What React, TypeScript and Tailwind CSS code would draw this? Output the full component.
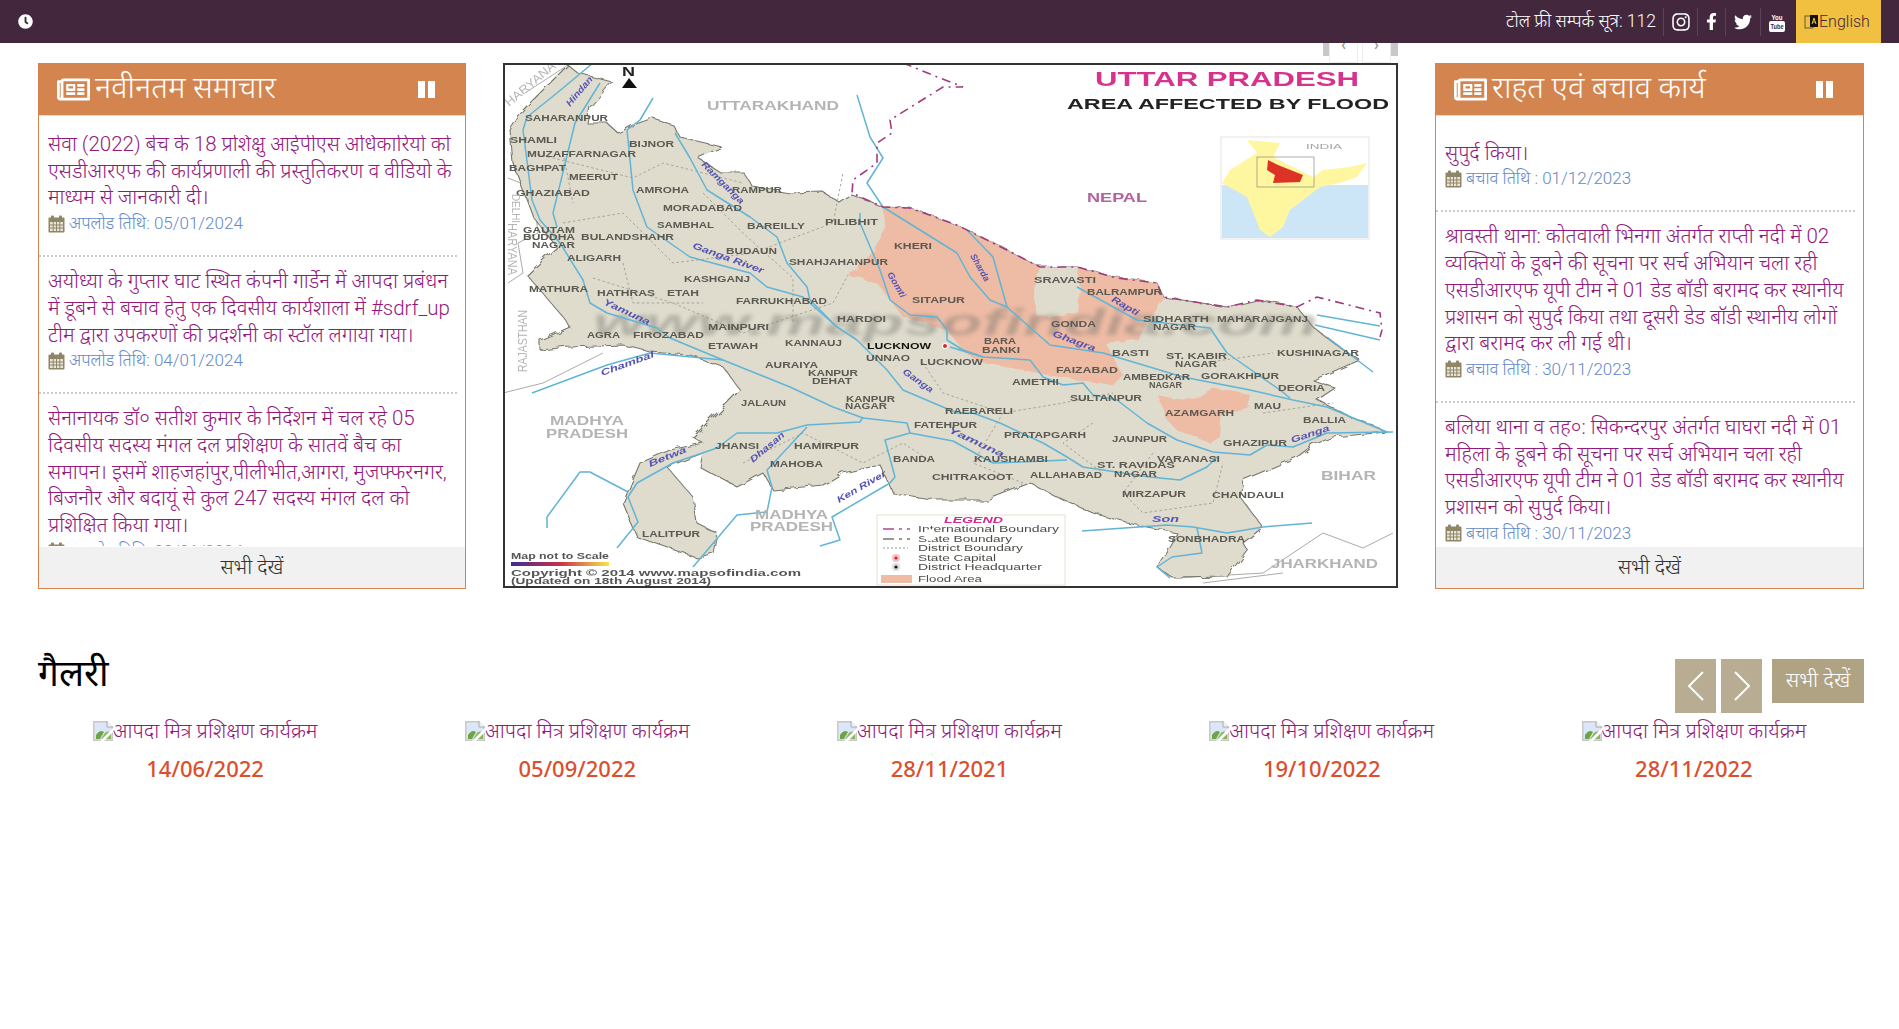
import React from "react";
import { FaInstagram, FaFacebookF, FaTwitter, FaClock, FaRegNewspaper } from "react-icons/fa";

// [text, x, baseline, width]
const districts: [string, number, number, number][] = [
  ["SAHARANPUR", 22, 58, 83], ["SHAMLI", 7, 80, 47], ["MUZAFFARNAGAR", 24, 94, 109], ["BAGHPAT", 6, 108, 57],
  ["MEERUT", 66, 117, 49], ["GHAZIABAD", 13, 133, 74], ["AMROHA", 133, 130, 53], ["BIJNOR", 126, 84, 45],
  ["RAMPUR", 229, 130, 50], ["MORADABAD", 160, 148, 79], ["SAMBHAL", 154, 165, 57], ["BAREILLY", 244, 166, 58],
  ["PILIBHIT", 322, 162, 53], ["GAUTAM", 20, 170, 52], ["BUDDHA", 20, 177, 52], ["NAGAR", 29, 185, 43],
  ["BULANDSHAHR", 78, 177, 93], ["BUDAUN", 223, 191, 51], ["SHAHJAHANPUR", 286, 202, 99], ["KHERI", 391, 186, 38],
  ["ALIGARH", 64, 198, 54], ["KASHGANJ", 181, 219, 66], ["MATHURA", 26, 229, 59], ["HATHRAS", 94, 233, 58],
  ["ETAH", 164, 233, 32], ["FARRUKHABAD", 233, 241, 91], ["HARDOI", 334, 259, 49], ["SITAPUR", 409, 240, 53],
  ["MAINPURI", 205, 267, 61], ["AGRA", 84, 275, 33], ["FIROZABAD", 130, 275, 71], ["ETAWAH", 205, 286, 50],
  ["KANNAUJ", 282, 283, 57], ["UNNAO", 363, 298, 44], ["LUCKNOW", 417, 302, 63], ["AURAIYA", 262, 305, 53],
  ["KANPUR", 305, 313, 50], ["DEHAT", 309, 321, 40], ["JALAUN", 238, 343, 45], ["KANPUR", 343, 339, 49],
  ["NAGAR", 342, 346, 42], ["FATEHPUR", 411, 365, 63], ["JHANSI", 212, 386, 44], ["HAMIRPUR", 291, 386, 65],
  ["MAHOBA", 267, 404, 53], ["BANDA", 390, 399, 42], ["LALITPUR", 139, 474, 58], ["CHITRAKOOT", 429, 417, 81],
  ["BARA", 481, 281, 32], ["BANKI", 479, 290, 38], ["BASTI", 609, 293, 37], ["ST. KABIR", 663, 296, 61],
  ["NAGAR", 672, 304, 42], ["KUSHINAGAR", 774, 293, 82], ["FAIZABAD", 553, 310, 62], ["AMBEDKAR", 620, 317, 67],
  ["NAGAR", 646, 325, 33], ["GORAKHPUR", 698, 316, 78], ["DEORIA", 775, 328, 47], ["AMETHI", 509, 322, 47],
  ["SULTANPUR", 567, 338, 72], ["MAU", 751, 346, 27], ["AZAMGARH", 662, 353, 69], ["BALLIA", 800, 360, 43],
  ["RAEBARELI", 442, 351, 68], ["PRATAPGARH", 501, 375, 82], ["JAUNPUR", 609, 379, 55], ["GHAZIPUR", 720, 383, 64],
  ["KAUSHAMBI", 471, 399, 74], ["VARANASI", 654, 399, 63], ["ST. RAVIDAS", 594, 405, 78], ["NAGAR", 611, 414, 43],
  ["ALLAHABAD", 527, 415, 72], ["MIRZAPUR", 619, 434, 64], ["CHANDAULI", 709, 435, 72], ["SONBHADRA", 665, 479, 77],
  ["SRAVASTI", 531, 220, 62], ["BALRAMPUR", 584, 232, 75], ["SIDHARTH", 640, 259, 66], ["MAHARAJGANJ", 714, 259, 91],
  ["NAGAR", 650, 267, 43], ["GONDA", 548, 264, 45],
];

const regions: [string, number, number, number][] = [
  ["UTTARAKHAND", 204, 47, 132], ["MADHYA", 47, 362, 74], ["PRADESH", 43, 375, 82], ["MADHYA", 252, 456, 73],
  ["PRADESH", 247, 468, 83], ["BIHAR", 818, 417, 55], ["JHARKHAND", 768, 505, 107],
];

// [text, x, y, width, angle]
const riverNames: [string, number, number, number, number][] = [
  ["Hindan", 67, 44, 36, -50], ["Ramganga", 198, 102, 56, 45], ["Ganga River", 189, 185, 75, 20], ["Gomti", 384, 211, 28, 60],
  ["Sharda", 467, 193, 30, 60], ["Yamuna", 100, 241, 50, 25], ["Chambal", 99, 313, 56, -20], ["Betwa", 147, 404, 40, -22],
  ["Dhasan", 250, 400, 42, -40], ["Ken River", 336, 440, 55, -30], ["Ganga", 399, 310, 35, 35], ["Yamuna", 445, 369, 60, 25],
  ["Ghagra", 549, 273, 45, 20], ["Rapti", 608, 238, 30, 30], ["Ganga", 789, 380, 40, -18], ["Son", 649, 459, 27, 0],
];

const rivers = [
  "M90 0L54 30L24 54L20 67L29 137L37 157L57 180L80 217L87 240L104 250L154 265L167 275L220 297L287 324L330 344L360 355L404 360L407 370L450 378L490 400L564 397",
  "M150 35L137 57L124 67L130 127L144 164L187 194L247 210L264 224L300 234L334 264L354 277L384 307L400 327L454 350L470 350L497 360L540 380L564 394L580 404L647 414L677 417L704 404L714 394",
  "M447 284L480 294L527 297L540 314L560 322L580 320L590 332L614 337L644 360L674 377L710 389L747 392L764 382L790 384L824 370L890 369",
  "M354 32L367 74L380 95L364 120L380 144L417 167L454 190L467 214L487 237L504 244L547 282L600 290L680 314L747 327L790 337L824 344L884 369",
  "M464 167L490 194L504 244",
  "M357 150L357 160L377 207L387 237L407 252L434 254L444 267L444 277L460 287L480 294",
  "M172 70L187 95L204 127L247 154L274 174L284 200L304 224L307 237L334 264",
  "M97 20L72 60L50 150L54 164",
  "M29 330L104 302L147 290L220 297",
  "M114 485L135 459L125 434L134 420L170 400L214 385L234 370L274 370L304 362L357 359L360 354",
  "M190 504L234 452L264 449L269 424L264 407L304 364",
  "M44 465L44 454L77 409L87 409L125 429",
  "M317 483L337 477L329 454L387 420L392 414L382 377L407 370",
  "M579 468L664 462L690 464L724 470L760 464L809 460",
  "M694 465L699 490L669 494L654 504L667 515",
  "M574 224L634 257L707 265L724 290L777 327L787 335",
  "M814 252L877 263M812 262L877 277M824 274L870 309",
];

const statePath =
  "M65 2L75 10L109 19L87 44L84 60L104 60L115 70L130 62L150 55L170 62L177 74L219 84L195 95L217 109L240 109L250 124L287 130L320 129L337 140L349 132L380 144L407 145L447 159L490 180L537 204L574 204L614 215L654 220L660 234L724 244L754 237L794 244L810 264L840 287L857 297L810 317L832 325L814 337L847 354L884 369L830 374L810 382L794 394L740 417L737 434L760 464L740 480L744 487L724 514L670 515L654 504L674 470L624 460L590 450L560 437L527 420L484 437L434 437L390 430L377 402L340 410L320 422L270 427L260 410L234 424L197 404L200 390L164 404L190 434L194 460L214 470L210 490L194 495L134 474L120 440L137 400L167 387L200 380L190 374L217 347L237 327L220 304L187 292L147 289L120 282L67 284L37 287L37 277L67 264L60 254L24 212L54 184L30 154L20 127L10 100L7 67L20 47Z";

const floodPath =
  "M384 164L370 187L345 212L374 220L400 254L444 267L462 290L479 300L520 307L544 312L610 322L620 312L602 280L634 277L640 267L647 254L660 234L654 220L614 215L574 204L537 204L490 180L447 159L407 145L380 144Z";

const districtLines = [
  "M30 90L130 115L160 100L240 120M60 160L120 150L170 200L250 190L330 160L340 110M90 215L170 240L240 270L330 240L345 212",
  "M200 130L240 170L290 215L290 260M420 300L440 330L500 350L560 340L610 330M500 350L470 400L520 420M650 390L620 430L640 450L710 440L720 400",
  "M700 300L770 290M760 350L830 340M590 360L560 380L600 410M240 400L300 370L360 400L400 380L430 400M120 200L130 240L200 240M60 90L70 140",
];

const newsItems = [
  {
    text: "सेवा (2022) बेच के 18 प्रशिक्षु आईपीएस अधिकारियों को\nएसडीआरएफ की कार्यप्रणाली की प्रस्तुतिकरण व वीडियो के\nमाध्यम से जानकारी दी।",
    date: "05/01/2024",
  },
  {
    text: "अयोध्या के गुप्तार घाट स्थित कंपनी गार्डेन में आपदा प्रबंधन\nमें डूबने से बचाव हेतु एक दिवसीय कार्यशाला में #sdrf_up\nटीम द्वारा उपकरणों की प्रदर्शनी का स्टॉल लगाया गया।",
    date: "04/01/2024",
  },
  {
    text: "सेनानायक डॉ० सतीश कुमार के निर्देशन में चल रहे 05\nदिवसीय सदस्य मंगल दल प्रशिक्षण के सातवें बैच का\nसमापन। इसमें शाहजहांपुर,पीलीभीत,आगरा, मुजफ्फरनगर,\nबिजनौर और बदायूं से कुल 247 सदस्य मंगल दल को\nप्रशिक्षित किया गया।",
    date: "03/01/2024",
  },
];

const rescueItems = [
  { text: "प्रशासन को\nसुपुर्द किया।", date: "01/12/2023" },
  {
    text: "श्रावस्ती थाना: कोतवाली भिनगा अंतर्गत राप्ती नदी में 02\nव्यक्तियों के डूबने की सूचना पर सर्च अभियान चला रही\nएसडीआरएफ यूपी टीम ने 01 डेड बॉडी बरामद कर स्थानीय\nप्रशासन को सुपुर्द किया तथा दूसरी डेड बॉडी स्थानीय लोगों\nद्वारा बरामद कर ली गई थी।",
    date: "30/11/2023",
  },
  {
    text: "बलिया थाना व तह०: सिकन्दरपुर अंतर्गत घाघरा नदी में 01\nमहिला के डूबने की सूचना पर सर्च अभियान चला रही\nएसडीआरएफ यूपी टीम ने 01 डेड बॉडी बरामद कर स्थानीय\nप्रशासन को सुपुर्द किया।",
    date: "30/11/2023",
  },
];

const galleryDates = ["14/06/2022", "05/09/2022", "28/11/2021", "19/10/2022", "28/11/2022"];

function CalendarIcon() {
  return (
    <svg width="17" height="18" viewBox="0 0 17 18" className="shrink-0">
      <rect x="0.5" y="2.5" width="16" height="15" rx="1" fill="#8f8567" />
      <rect x="3" y="0.5" width="3" height="5" rx="1" fill="#8f8567" />
      <rect x="11" y="0.5" width="3" height="5" rx="1" fill="#8f8567" />
      <path d="M2 7h13v9H2z" fill="#e9e5d8" />
      <path d="M2 10h13M2 13h13M5.2 7v9M8.5 7v9M11.8 7v9" stroke="#8f8567" strokeWidth="1" />
    </svg>
  );
}

function BrokenImage() {
  return (
    <svg width="20" height="20" viewBox="0 0 20 20" className="shrink-0">
      <path d="M0 0h14l6 6v14H0z" fill="#c8c8c8" />
      <path d="M1.5 1.5h12l5 5v12h-17z" fill="#dbe6f8" />
      <path d="M3 14c3-4 5-5 8-3l-4 7H3z" fill="#6da544" />
      <path d="M8 18l4-6c2-2 5-2 6 0v6z" fill="#8ab35c" />
      <path d="M20 7L7 20h4l9-9z" fill="#fff" />
      <path d="M14 0v6h6" fill="#f1f1f1" stroke="#aaa" strokeWidth="1" />
    </svg>
  );
}

function PanelHeader({ title }: { title: string }) {
  return (
    <div className="h-[53px] shrink-0 bg-[#d4854f] border-b border-[#ecd9cb] flex items-center pl-[19px] pr-[31px] text-white -mx-px -mt-px">
      <FaRegNewspaper size={33} className="shrink-0" />
      <span className="ml-[5px] text-[31px] leading-[40px] -mt-[3px] font-light">{title}</span>
      <div className="ml-auto flex gap-[3px]">
        <span className="w-[7px] h-[17px] bg-white" />
        <span className="w-[7px] h-[17px] bg-white" />
      </div>
    </div>
  );
}

function Feed({ items, label, offset }: { items: { text: string; date: string }[]; label: string; offset: string }) {
  return (
    <div className="h-[411px] mt-[19px] overflow-hidden">
      <div className={offset}>
        {items.map((item, i) => (
          <div key={i} className={`mr-[8px] pl-[9px] pb-[19px] mb-[11px] border-b-2 border-dotted border-[#cccccc] ${i === items.length - 1 ? "border-b-0" : ""}`}>
            <p className="text-[20.5px] leading-[26.7px] font-light text-[#93197c] whitespace-pre">{item.text}</p>
            <div className="flex items-center text-[17px] leading-[25px] font-light text-[#6488c8]">
              <CalendarIcon />
              <span className="ml-[4px]">{label} {item.date}</span>
            </div>
          </div>
        ))}
      </div>
    </div>
  );
}

function FloodMap() {
  return (
    <svg width="895" height="525" viewBox="0 0 895 525" className="block blur-[0.5px]" fontFamily="'Liberation Sans', sans-serif">
      <defs>
        <filter id="emboss" x="-5%" y="-30%" width="110%" height="160%"><feGaussianBlur stdDeviation="2.2" /></filter>
        <filter id="rough" x="-2%" y="-2%" width="104%" height="104%">
          <feTurbulence type="fractalNoise" baseFrequency="0.09" numOctaves="2" seed="4" />
          <feDisplacementMap in="SourceGraphic" scale="7" />
        </filter>
        <linearGradient id="scale">
          <stop offset="0" stopColor="#3a2f92" />
          <stop offset="0.5" stopColor="#c9304a" />
          <stop offset="1" stopColor="#f7e547" />
        </linearGradient>
        <clipPath id="mapClip"><rect x="0" y="0" width="895" height="525" /></clipPath>
      </defs>
      <rect width="895" height="525" fill="#fff" />
      <g clipPath="url(#mapClip)">
        {/* neighbouring borders */}
        <path d="M22 30L65 2M18 60L10 100M5 115L30 125L35 170L15 180L20 210L5 220M0 330L40 320L100 290M674 515L760 510L820 470L860 485L890 470M700 520L780 510" fill="none" stroke="#aaa" strokeWidth="1" />
        <g filter="url(#rough)">
          <path d={statePath} fill="#dfdccd" stroke="#77776c" strokeWidth="1.1" strokeLinejoin="round" />
          <path d={floodPath} fill="#eebba4" />
          <path d="M537 204L574 204L577 225L575 250L535 255L530 230Z" fill="#dfdccd" />
          <path d="M655 332L677 337L704 332L707 324L747 332L744 345L719 350L717 374L707 380L674 367L664 357Z" fill="#eebba4" />
        </g>
        {districtLines.map((d, i) => (
          <path key={i} d={d} fill="none" stroke="#a3a398" strokeWidth="1" strokeDasharray="2.5 2.5" />
        ))}
        <text x="90" y="272" fontSize="36" fontWeight="700" fontStyle="italic" fill="#77776f" opacity="0.42" filter="url(#emboss)" textLength="725" lengthAdjust="spacingAndGlyphs">www.mapsofindia.com</text>
        {rivers.map((d, i) => (
          <path key={i} d={d} fill="none" stroke="#62b4d6" strokeWidth="1.5" strokeLinejoin="round" />
        ))}
        <path d="M400 0L437 15L460 24L440 24L387 57L389 70L374 80L374 100L350 117L349 130L380 144L407 145L454 162L490 180L537 204L574 204L614 215L654 220L660 234L724 244L754 237L794 244L814 234L877 250L879 267L877 274" fill="none" stroke="#a23a80" strokeWidth="1.6" strokeDasharray="9 5 2 5" />
        {districts.map(([t, x, y, w], i) => (
          <text key={i} x={x} y={y} fontSize="8.5" fontWeight="700" fill="#5a5a52" textLength={w} lengthAdjust="spacingAndGlyphs">{t}</text>
        ))}
        <text x="364" y="286" fontSize="9" fontWeight="700" fill="#111" textLength="64" lengthAdjust="spacingAndGlyphs">LUCKNOW</text>
        <circle cx="442" cy="283" r="3" fill="#fff" />
        <circle cx="442" cy="283" r="2" fill="#d7282f" />
        {regions.map(([t, x, y, w], i) => (
          <text key={i} x={x} y={y} fontSize="12" fontWeight="700" fill="#b4b4b4" textLength={w} lengthAdjust="spacingAndGlyphs">{t}</text>
        ))}
        <text x="584" y="139" fontSize="12" fontWeight="700" fill="#b5619e" textLength="60" lengthAdjust="spacingAndGlyphs">NEPAL</text>
        <text transform="translate(24 309) rotate(-90)" fontSize="12" fill="#b4b4b4" textLength="62" lengthAdjust="spacingAndGlyphs">RAJASTHAN</text>
        <text transform="translate(9 131) rotate(90)" fontSize="10" fill="#b4b4b4" textLength="29" lengthAdjust="spacingAndGlyphs">DELHI</text>
        <text transform="translate(5 160) rotate(90)" fontSize="12" fill="#b4b4b4" textLength="52" lengthAdjust="spacingAndGlyphs">HARYANA</text>
        <text transform="translate(6 44) rotate(-40)" fontSize="12" fill="#b4b4b4" textLength="62" lengthAdjust="spacingAndGlyphs">HARYANA</text>
        {riverNames.map(([t, x, y, w, a], i) => (
          <text key={i} transform={`translate(${x} ${y}) rotate(${a})`} fontSize="9" fontWeight="700" fontStyle="italic" fill="#5554b4" textLength={w} lengthAdjust="spacingAndGlyphs">{t}</text>
        ))}
        <text x="119" y="13" fontSize="13" fontWeight="700" fill="#222" textLength="13" lengthAdjust="spacingAndGlyphs">N</text>
        <path d="M119 25L126 15L134 25Z" fill="#111" />
        <text x="592" y="23" fontSize="21" fontWeight="700" fill="#d6338f" textLength="264" lengthAdjust="spacingAndGlyphs">UTTAR PRADESH</text>
        <text x="564" y="46" fontSize="15" fontWeight="700" fill="#222" textLength="322" lengthAdjust="spacingAndGlyphs">AREA AFFECTED BY FLOOD</text>
        {/* India inset */}
        <rect x="718" y="74" width="148" height="102" fill="#fff" stroke="#e3e3e3" />
        <rect x="719" y="122" width="146" height="53" fill="#cde6f7" />
        <path d="M744 77L777 80L770 94L810 114L820 107L847 104L864 100L854 114L837 120L817 124L787 147L780 164L767 174L757 167L744 134L719 120L727 107L754 90Z" fill="#fff6a0" />
        <path d="M765 97L775 102L800 112L797 119L770 120L772 112L764 107Z" fill="#dd3327" />
        <rect x="754" y="94" width="57" height="30" fill="none" stroke="#8a8a80" strokeWidth="0.7" />
        <text x="803" y="86" fontSize="7.5" fill="#a5a5a5" textLength="36" lengthAdjust="spacingAndGlyphs">INDIA</text>
        {/* legend */}
        <rect x="374" y="452" width="188" height="70" fill="#fff" stroke="#e6e2d4" />
        <text x="441" y="460" fontSize="8.5" fontWeight="700" fontStyle="italic" fill="#d6268f" textLength="59" lengthAdjust="spacingAndGlyphs">LEGEND</text>
        {([
          ["International Boundary", 469, 141],
          ["State Boundary", 479, 94],
          ["District Boundary", 488, 105],
          ["State Capital", 498, 78],
          ["District Headquarter", 507, 124],
          ["Flood Area", 519, 64],
        ] as [string, number, number][]).map(([t, y, w]) => (
          <text key={t} x="415" y={y} fontSize="8.5" fill="#4c4c46" textLength={w} lengthAdjust="spacingAndGlyphs">{t}</text>
        ))}
        <path d="M380 466H391M396 466h3M404 466h3" stroke="#b04a90" strokeWidth="1.4" />
        <path d="M380 476H391M396 476h3M404 476h3" stroke="#777" strokeWidth="1.4" />
        <path d="M380 485H405" stroke="#999" strokeWidth="1" strokeDasharray="2 2" />
        <circle cx="393" cy="495" r="4" fill="#f0c3c3" />
        <circle cx="393" cy="495" r="1.6" fill="#d7282f" />
        <circle cx="393" cy="504" r="4" fill="#ddd" />
        <circle cx="393" cy="504" r="1.6" fill="#111" />
        <rect x="378" y="512" width="31" height="8" fill="#eebba4" />
        <circle cx="427" cy="472" r="6" fill="#fff" />
        <text x="8" y="496" fontSize="8.5" fontWeight="700" fill="#555" textLength="98" lengthAdjust="spacingAndGlyphs">Map not to Scale</text>
        <rect x="8" y="499" width="98" height="4" fill="url(#scale)" />
        <text x="8" y="513" fontSize="9" fontWeight="700" fill="#555" textLength="290" lengthAdjust="spacingAndGlyphs">Copyright © 2014 www.mapsofindia.com</text>
        <text x="8" y="521" fontSize="9" fontWeight="700" fill="#555" textLength="200" lengthAdjust="spacingAndGlyphs">(Updated on 18th August 2014)</text>
      </g>
      <rect x="1" y="1" width="893" height="523" fill="none" stroke="#333" strokeWidth="2" />
    </svg>
  );
}

export default function App() {
  const font = { fontFamily: "Roboto, 'Noto Sans', 'Noto Sans Devanagari', sans-serif" };
  return (
    <div className="w-[1899px] h-[1029px] bg-white overflow-hidden text-[#333]" style={font}>
      {/* top bar */}
      <div className="h-[43px] bg-[#42273d] flex items-center pl-[18px] pr-[18px] text-white">
        <FaClock size={15} />
        <div className="ml-auto flex items-center h-full">
          <span className="text-[17.5px] font-light mr-[7px]">टोल फ्री सम्पर्क सूत्र: 112</span>
          <div className="flex items-center h-[28px] w-[34px] justify-center border-l border-[#5b4357]"><FaInstagram size={20} /></div>
          <div className="flex items-center h-[28px] w-[28px] justify-center border-l border-[#5b4357]"><FaFacebookF size={17} /></div>
          <div className="flex items-center h-[28px] w-[35px] justify-center border-l border-[#5b4357]"><FaTwitter size={18} /></div>
          <div className="flex items-center h-[28px] w-[33px] justify-center border-l border-[#5b4357]">
            <svg width="16" height="20" viewBox="0 0 16 20" fontFamily="'Liberation Sans', sans-serif">
              <text x="8" y="8" fontSize="8" fontWeight="700" fill="#fff" textAnchor="middle" textLength="11" lengthAdjust="spacingAndGlyphs">You</text>
              <rect x="0" y="9" width="16" height="11" rx="2" fill="#fff" />
              <text x="8" y="17" fontSize="7.5" fontWeight="700" fill="#42273d" textAnchor="middle" textLength="13" lengthAdjust="spacingAndGlyphs">Tube</text>
            </svg>
          </div>
          <div className="h-full w-[85px] ml-[3px] bg-[#f2c040] flex items-center pl-[8px] text-[#42273d] text-[16px] font-light">
            <svg width="15" height="16" viewBox="0 0 15 16" className="shrink-0">
              <rect x="1" y="2" width="8" height="12" fill="none" stroke="#6a5a30" strokeWidth="1" />
              <rect x="6" y="1" width="8" height="12" fill="#111" />
              <path d="M8 10l2-6 2 6M9 8h2" stroke="#f2c040" strokeWidth="1" fill="none" />
            </svg>
            <span>English</span>
          </div>
        </div>
      </div>

      {/* news, map, rescue */}
      <div className="flex pl-[38px] mt-[20px] gap-[37px]">
        <div className="w-[428px] h-[526px] border border-[#d4854f] flex flex-col overflow-hidden">
          <PanelHeader title="नवीनतम समाचार" />
          <Feed items={newsItems} label="अपलोड तिथि:" offset="-mt-[4px]" />
          <div className="mt-auto h-[41px] bg-[#f1f1f1] flex items-center justify-center text-[20.5px] font-light text-[#333]">सभी देखें</div>
        </div>
        <div className="relative w-[895px] h-[525px]">
          <FloodMap />
          <div className="absolute right-0 bottom-full w-[75px] h-[20px] flex overflow-hidden">
            <span className="w-[6px] h-[13px] bg-[#c8c8c8]" />
            <span className="w-[29px] h-full border-x border-b border-[#eeeeee] text-center text-[#999] text-[16px] leading-[4px] font-bold">‹</span>
            <span className="w-[4px]" />
            <span className="w-[29px] h-full border-x border-b border-[#eeeeee] text-center text-[#999] text-[16px] leading-[4px] font-bold">›</span>
            <span className="w-[7px] h-[13px] bg-[#c8c8c8]" />
          </div>
        </div>
        <div className="w-[429px] h-[526px] border border-[#d4854f] flex flex-col overflow-hidden">
          <PanelHeader title="राहत एवं बचाव कार्य" />
          <Feed items={rescueItems} label="बचाव तिथि :" offset="-mt-[22px]" />
          <div className="mt-auto h-[41px] bg-[#f1f1f1] flex items-center justify-center text-[20.5px] font-light text-[#333]">सभी देखें</div>
        </div>
      </div>

      {/* gallery */}
      <div className="flex items-start px-[35px] pl-[38px] mt-[70px] h-[56px]">
        <h2 className="text-[37px] leading-[54px] -mt-[12px] text-black" style={{ fontFamily: "'Liberation Serif', serif" }}>गैलरी</h2>
        <div className="ml-auto flex items-start">
          <button className="w-[41px] h-[54px] bg-[#b8ad92] flex items-center justify-center">
            <svg width="18" height="32" viewBox="0 0 18 32"><path d="M16 2L2 16l14 14" fill="none" stroke="#fff" strokeWidth="2" /></svg>
          </button>
          <button className="w-[41px] h-[54px] ml-[5px] bg-[#b8ad92] flex items-center justify-center">
            <svg width="18" height="32" viewBox="0 0 18 32"><path d="M2 2l14 14L2 30" fill="none" stroke="#fff" strokeWidth="2" /></svg>
          </button>
          <button className="w-[92px] h-[44px] ml-[10px] bg-[#afa384] text-white text-[21px] font-light">सभी देखें</button>
        </div>
      </div>
      <div className="grid grid-cols-5 px-[19px] mt-[4px]">
        {galleryDates.map((d) => (
          <div key={d} className="flex flex-col items-center">
            <div className="flex items-center text-[20.6px] leading-[24px] font-light text-[#93197c]">
              <BrokenImage />
              <span>आपदा मित्र प्रशिक्षण कार्यक्रम</span>
            </div>
            <div className="mt-[11px] text-[22px] leading-[28px] font-medium text-[#dc4f2e]" style={{ fontFamily: "'Noto Sans', sans-serif" }}>{d}</div>
          </div>
        ))}
      </div>
    </div>
  );
}
